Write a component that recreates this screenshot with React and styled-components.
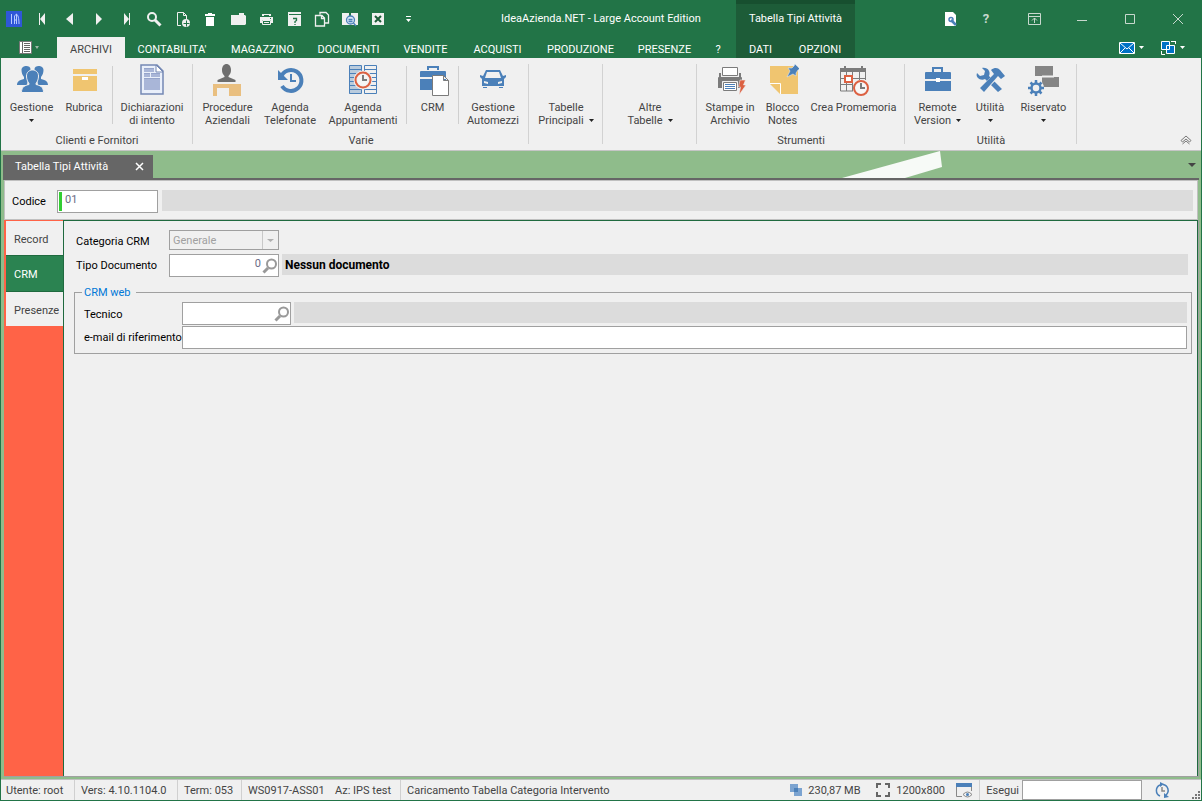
import React from 'react';
import styled, { createGlobalStyle, css } from 'styled-components';

const GlobalStyle = createGlobalStyle`
	* { box-sizing: border-box; }
	body {
		margin: 0;
		font: 11px/13px Roboto, Tahoma, sans-serif;
		color: #444;
	}
	button, input, select {
		margin: 0;
		padding: 0;
		border: 0;
		border-radius: 0;
		background: transparent;
		font: inherit;
		color: inherit;
	}
	svg { display: block; flex: none; }
`;

const blue = '#4b80b9';
const gray = '#7b7b7b';
const yellow = '#f0c570';
const red = '#dc6142';
const face = '#f0f0f0';

const Shell = styled.div`
	display: flex;
	flex-direction: column;
	min-height: 100vh;
	background: #227447;
`;

/* ---------- title bar and ribbon tabs ---------- */

const Header = styled.header`
	display: flex;
	color: #fff;
`;

const HeaderMain = styled.div`
	flex: none;
`;

const TitleRow = styled.div`
	display: flex;
	align-items: center;
	height: 37px;
`;

const TabRow = styled.nav`
	display: flex;
	align-items: stretch;
	height: 21px;
`;

const QuickButton = styled.button`
	display: flex;
	align-items: center;
	justify-content: center;
	width: ${p => p.$wide ? '32px' : '28px'};
	height: 28px;
`;

const WindowTitle = styled.div`
	padding-left: 77px;
	white-space: nowrap;
`;

const FileMenu = styled.button`
	display: flex;
	align-items: center;
	justify-content: center;
	gap: 3px;
	width: 57px;
`;

const Tab = styled.button`
	width: ${p => p.$w}px;
	padding-top: 3px;
	text-align: center;
	white-space: nowrap;
	color: #fff;
	${p => p.$active && css`
		background: ${face};
		color: #444;
	`}
`;

const Context = styled.div`
	flex: none;
	margin-left: 3px;
	border-top: 4px solid #174f2f;
	background: #1d5c38;
`;

const ContextTitle = styled.div`
	height: 33px;
	padding-top: 8px;
	text-align: center;
`;

const HeaderEnd = styled.div`
	flex: 1;
	display: flex;
	flex-direction: column;
	align-items: flex-end;
`;

const WindowButton = styled.button`
	display: flex;
	align-items: center;
	justify-content: center;
	width: ${p => p.$w || 48}px;
	height: 28px;
	color: #c8d8ce;
	font-weight: ${p => p.$bold ? 'bold' : 'normal'};
	font-size: 13px;
`;

const DropButton = styled.button`
	display: flex;
	align-items: center;
	gap: 4px;
	padding-right: 17px;
`;

/* ---------- ribbon ---------- */

const Frame = styled.div`
	flex: 1;
	display: flex;
	flex-direction: column;
	margin: 0 1px 1px;
	background: #8fbc8b;
`;

const Ribbon = styled.section`
	display: flex;
	height: 93px;
	background: ${face};
	border-bottom: 1px solid #c5c5c5;
`;

const Group = styled.div`
	display: flex;
	flex-direction: column;
	justify-content: space-between;
	margin: 6px 0;
	padding: 0 3px 0 4px;
	border-right: 1px solid #d2d2d2;
`;

const GroupItems = styled.div`
	display: flex;
`;

const GroupLabel = styled.div`
	height: 13px;
	margin-bottom: -3px;
	text-align: center;
	line-height: 13px;
`;

const Divider = styled.div`
	width: 1px;
	height: 58px;
	margin: 2px 2px 0;
	background: #cfcfcf;
`;

const BigButton = styled.button`
	display: flex;
	flex-direction: column;
	align-items: center;
	width: ${p => p.$w}px;
	white-space: nowrap;
`;

const BigIcon = styled.span`
	height: 37px;
	width: 32px;
`;

const BigLine = styled.span`
	display: flex;
	align-items: center;
	gap: 5px;
	height: 13px;
`;

const Collapse = styled.button`
	align-self: flex-end;
	margin: 0 9px 5px auto;
`;

/* ---------- document area ---------- */

const DocStrip = styled.div`
	position: relative;
	display: flex;
	align-items: flex-end;
	height: 29px;
	margin: 0 2px;
	border-bottom: 2px solid #666;
`;

const Sweep = styled.svg`
	position: absolute;
	right: 257px;
	top: 0;
`;

const DocTab = styled.div`
	display: flex;
	align-items: center;
	justify-content: space-between;
	width: 150px;
	height: 23px;
	padding: 0 9px 0 12px;
	background: #666;
	color: #fff;
`;

const DocMenu = styled.button`
	margin: 0 3px 10px auto;
`;

const CodeBar = styled.div`
	display: flex;
	align-items: flex-start;
	height: 40px;
	margin: 0 3px;
	padding: 9px 4px 0 7px;
	background: ${face};
	border: 1px solid #c0c0c0;
`;

const Label = styled.label`
	flex: none;
	width: ${p => p.$w}px;
	padding-top: ${p => p.$drop || 5}px;
	color: #000;
	white-space: nowrap;
`;

const Field = styled.div`
	display: flex;
	align-items: center;
	flex: ${p => p.$w ? 'none' : '1'};
	width: ${p => p.$w ? `${p.$w}px` : 'auto'};
	height: ${p => p.$short ? '20px' : '23px'};
	border: 1px solid #a0a0a0;
	background: ${p => p.$disabled ? face : '#fff'};
`;

const Required = styled.span`
	width: 3px;
	height: 19px;
	margin: 0 2px 0 1px;
	background: #32cd32;
`;

const TextInput = styled.input`
	flex: 1;
	min-width: 0;
	height: 21px;
	padding: 0 1px 5px;
	text-align: ${p => p.$right ? 'right' : 'left'};
	color: #6b6b85;
`;

const Select = styled.select`
	flex: 1;
	height: 18px;
	padding: 0 3px;
	appearance: none;
	opacity: 1;
	color: #a0a0a0;
`;

const SelectArrow = styled.span`
	display: flex;
	align-items: center;
	justify-content: center;
	width: 16px;
	height: 18px;
	border-left: 1px solid #c8c8c8;
`;

const Lookup = styled.button`
	width: 16px;
	height: 16px;
`;

const Readout = styled.output`
	flex: 1;
	height: 21px;
	margin-left: ${p => p.$gap || 3}px;
	padding: 5px 3px 0;
	background: #dcdcdc;
	color: #000;
	font-size: 12px;
	font-weight: bold;
`;

const Work = styled.main`
	flex: 1;
	display: flex;
	margin: 0 2px 0 3px;
	border-right: 1px solid #a0a0a0;
	border-bottom: 1px solid #a0a0a0;
	background: ${face};
`;

const Side = styled.nav`
	display: flex;
	flex-direction: column;
	width: 59px;
	padding: 1px 0 0 2px;
	background: #ff6347;
`;

const SideTab = styled.button`
	height: ${p => p.$active ? '37px' : '34px'};
	padding: 2px 0 0 8px;
	text-align: left;
	background: ${face};
	${p => p.$active && css`
		background: #2b8351;
		border: 1px solid #1f6a3f;
		border-width: 1px 0;
		color: #fff;
	`}
`;

const Form = styled.form`
	flex: 1;
	padding: 9px 5px 0 10px;
	border: 1px solid #1f6a3f;
	border-bottom: 0;
`;

const FormRow = styled.div`
	display: flex;
	align-items: flex-start;
	margin-bottom: ${p => p.$gap || 0}px;
	padding: 0 4px 0 2px;
`;

const FieldSet = styled.fieldset`
	margin: 9px 0 0;
	padding: 3px 0 4px 7px;
	border: 1px solid #a0a0a0;
`;

const Legend = styled.legend`
	height: 13px;
	padding: 0 5px 0 2px;
	color: #0078d7;
`;

/* ---------- status bar ---------- */

const Status = styled.footer`
	display: flex;
	align-items: center;
	height: 21px;
	margin-top: 2px;
	border-top: 1px solid #c0c0c0;
	background: ${face};
	white-space: nowrap;
`;

const StatusItem = styled.span`
	display: flex;
	align-items: center;
	gap: 6px;
	width: ${p => p.$w ? `${p.$w}px` : 'auto'};
	height: 20px;
	padding-left: ${p => p.$pad || 6}px;
	border-left: ${p => p.$line ? '1px solid #d0d0d0' : '0'};
`;

const StatusEnd = styled.div`
	display: flex;
	align-items: center;
	margin-left: auto;
`;

const RunInput = styled.input`
	width: 120px;
	height: 20px;
	margin-left: 3px;
	border: 1px solid #a0a0a0;
	background: #fff;
`;

const Grip = styled.span`
	align-self: flex-end;
	margin: 0 1px 1px 22px;
`;

/* ---------- icons ---------- */

const Caret = ({ color = '#222', w = 5 }) => (
	<svg width={w} height='3' viewBox='0 0 5 3' preserveAspectRatio='none'><path d='M0 0h5L2.5 3z' fill={color} /></svg>
);

const Small = ({ children }) => (
	<svg width='16' height='16' viewBox='0 0 16 16' fill='none'>{children}</svg>
);

const quick = [
	['Applicazione', <Small><path fill='#2f57d8' d='M0 0h16v16H0z' /><path stroke='#b9cbff' d='M5.500 3v10M8.500 13V5l2-2M10.500 3v10M13 13c0-6-1-9-2.500-10M8 9h3' /></Small>],
	['Primo', <Small><path fill='#f0f0f0' d='M5 2h1v12H5zM11 2v12L6 8z' /></Small>],
	['Precedente', <Small><path fill='#f0f0f0' d='M11 2v12L4 8z' /></Small>],
	['Successivo', <Small><path fill='#f0f0f0' d='M6 2v12l6-6z' /></Small>],
	['Ultimo', <Small><path fill='#f0f0f0' d='M11 2h1v12h-1zM6 2v12l5-6z' /></Small>],
	['Cerca', <Small><circle cx='6' cy='6' r='4' stroke='#f0f0f0' strokeWidth='2' /><path d='M9 9l5.500 5.500' stroke='#f0f0f0' strokeWidth='3' /></Small>],
	['Nuovo', <Small><path stroke='#f0f0f0' d='M7 14.500H3.500v-13h6l3 3V8M9.500 1.500v3h3' /><circle cx='12' cy='12' r='4' fill='#f0f0f0' /><path stroke='#227447' d='M12.500 9.500v6M9.500 12.500h6' /></Small>],
	['Elimina', <Small><path fill='#fff' d='M3 3h3V2h4v1h3v2H3zM4 6h8v9H4z' /></Small>],
	['Apri', <Small><path fill='#f0f0f0' d='M1 4h8V2h5v2h1l1 1v8l-1 1H1z' /></Small>],
	['Stampa', <Small><path fill='#f0f0f0' d='M4 3h9v2H4zM2 6h13v6h-2V9H4v3H2z' /><path stroke='#f0f0f0' d='M4.500 9.500h8v4h-8zM6 11.500h5' /><path fill='#227447' d='M12 7h1v1h-1zM6 4h5v1H6z' /></Small>],
	['Guida', <Small><path fill='#f0f0f0' d='M2 1h12v1H3v13H2z' /><path fill='#f0f0f0' d='M3 4h12v11H3zM2 1h13v2H2z' /><path stroke='#227447' strokeWidth='1.300' d='M7 7.500h3.500v2L9 10.500V12M9 13v1' /></Small>],
	['Copia', <Small><path stroke='#f0f0f0' strokeWidth='1.300' d='M6 3.500V1.500h6l2.500 2.500v8H11M1.500 4.500H8L10.500 7v8h-9zM7.500 4.500v3h3' /></Small>],
	['Anteprima', <Small><path fill='#f0f0f0' d='M0 2h7v1h2V2h7v12H0z' /><path fill='#227447' d='M7 2h2v3H7z' /><circle cx='8.500' cy='9' r='4' fill='#d8e8f8' stroke='#4b80b9' strokeWidth='1.300' /><path stroke='#4b80b9' strokeWidth='1.300' d='M6.500 8.500h4M6.500 10.500h4M11.500 12l2.500 3' /></Small>],
	['Chiudi', <Small><path fill='#f0f0f0' d='M2 2h12v12H2z' /><path stroke='#1c5c38' strokeWidth='2' d='M5 5l6 6M11 5l-6 6' /></Small>],
];

const Big = ({ children }) => (
	<svg width='32' height='32' viewBox='0 0 32 32' fill='none'>{children}</svg>
);

const People = () => (
	<Big>
		<g fill={blue}>
			<path d='M5.500 6c0-5 9-5 9-1 0 4-1 7-2.500 9l-1 7H1c0-3 2-5 7-6v-2c-1.500-2-2.500-4-2.500-7z' />
			<path d='M27.500 6c0-5-9-5-9-1 0 4 1 7 2.500 9l1 7h10c0-3-2-5-7-6v-2c1.500-2 2.500-4 2.500-7z' />
		</g>
		<path fill={blue} stroke={face} d='M10.500 12c0-8 12-8 12 0 0 3-1 5.500-2.500 7.500v1c4 1 7.500 2 7.500 8h-22c0-6 3.500-7 7.500-8v-1c-1.500-2-2.500-4.500-2.500-7.500z' />
	</Big>
);

const Box = () => (
	<Big><path fill={yellow} d='M5 5h24v5H5zM5 12h24v15H5z' /><path fill='#fff' d='M14 13h6v3h-6z' /></Big>
);

const Page = () => (
	<Big>
		<path d='M5 1h16l6 6v23H5z' fill='#e9effa' stroke='#7488b4' strokeWidth='1.500' />
		<path d='M20 1v7h7z' fill='#fff' stroke='#7488b4' />
		<path fill='#a9b6d8' d='M8 4h10v4H8zM8 9h6v4H8zM15 9h9v4h-9zM8 14h16v12H8z' />
		<path stroke='#95a4cb' d='M8 4.500h10M8 9.500h6M15 9.500h9M8 14.500h16' />
	</Big>
);

const Desk = () => (
	<Big>
		<path fill='#6e6e6e' d='M10 6c0-8 9-8 9 0 0 3-1 4.500-2.500 6v1l7 3v2h-18v-2l7-3v-1C11 10.500 10 9 10 6z' />
		<path fill='#e9bf80' d='M1 20h28v12H17v-8H5v8H1z' />
	</Big>
);

const History = () => (
	<Big>
		<path stroke={blue} strokeWidth='4' d='M7 13a10.500 10.500 0 1 1 1 9' />
		<path fill={blue} d='M4 6v10h10z' />
		<path stroke={blue} strokeWidth='2' d='M17 10v7h5' />
	</Big>
);

const Planner = () => (
	<Big>
		<path fill='#b9cbdd' d='M2 2h12v28H2z' />
		<path stroke={blue} d='M2.500 1.500h12v28h-12zM17.500 1.500h12v28h-12zM2 5.500h12M17 5.500h12M2 9.500h12M17 9.500h12M2 13.500h12M17 13.500h12M2 17.500h12M17 17.500h12M2 21.500h12M17 21.500h12M2 25.500h12M17 25.500h12' />
		<circle cx='16' cy='16' r='7.500' fill='#f5f5f5' stroke={face} strokeWidth='4' />
		<circle cx='16' cy='16' r='7.500' stroke={red} strokeWidth='2' />
		<path stroke={gray} strokeWidth='2' d='M16 11v5h4' />
	</Big>
);

const CaseDoc = () => (
	<Big>
		<path stroke={blue} strokeWidth='2' d='M11 6V3h10v3' />
		<path fill={blue} d='M4 7q-1 0-1 1v5h26V8q0-1-1-1zM3 15h26v11H3z' />
		<path fill='#fff' stroke={gray} d='M15.500 11.500h11l5 5v15h-16zM26.500 11.500v5h5' />
	</Big>
);

const Car = () => (
	<Big>
		<path fill={blue} fillRule='evenodd' d='M9 6h14l3 6 3-1v2l-2 2v7h-1v2h-4v-2H10v2H6v-2H5v-7l-2-2v-2l3 1zM10 8l-2 6h16l-2-6zM7 17v2l4 1v-2zM25 17v2l-4 1v-2z' />
		<path stroke={face} d='M5 22.500h22' />
	</Big>
);

const Printer = () => (
	<Big>
		<path fill={gray} d='M5 9h2v4h18V9h2v4q1 0 1 1v10H4V14q0-1 1-1z' />
		<path fill='#fff' stroke={gray} d='M8.500 3.500h15v8h-15z' />
		<path fill='#fff' stroke={face} d='M8.500 17.500h15v9h-15z' />
		<path fill='#fff' stroke={gray} d='M9.500 18.500h13v8h-13z' />
		<path stroke={blue} d='M11 20.500h10M11 22.500h10M11 24.500h10' />
		<path fill={red} stroke={face} strokeWidth='.6' d='M26 16h5.500l-2 5h2.500l-7 10 1.500-8h-2z' />
	</Big>
);

const Note = () => (
	<Big>
		<path fill={yellow} d='M3 2h28v28H14L3 19z' />
		<path fill={yellow} d='M3 20h10v10z' />
		<path stroke='#fff' d='M3 19.500h10.500V30' />
		<path fill={blue} stroke='#dfe8f0' strokeWidth='.6' d='M28 0l5 5-2 1-2 3v3l-3-2-6 3 3-6-2-3h4l2-2z' />
	</Big>
);

const Calendar = () => (
	<Big>
		<path fill={gray} d='M2 4h26v4H2zM6 2h2v4H6zM23 2h2v4h-2z' />
		<path stroke={gray} d='M2.500 4v23H15M27.500 4v12M8.500 8v19M14.500 8v19M21.500 8v8M2 14.500h26M2 20.500h13' />
		<path fill='#fff' stroke={red} strokeWidth='2' d='M7 12h7v6H7z' />
		<circle cx='23' cy='24' r='8' fill={face} />
		<circle cx='23' cy='24' r='7' fill='#f7f7f7' stroke={red} strokeWidth='2' />
		<path stroke={gray} strokeWidth='2' d='M23 19v5h4' />
	</Big>
);

const Case = () => (
	<Big>
		<path stroke={blue} strokeWidth='2' d='M11 8V4h9v4' />
		<path fill={blue} d='M4 8q-1 0-1 1v6h26V9q0-1-1-1zM3 17h26v10H3z' />
		<path fill='#fff' d='M14 14h4v4h-4z' />
	</Big>
);

const Tools = () => (
	<Big>
		<path fill={blue} d='M3 9L6 12l4-1 1-4-3-3c6-1 9 4 7 8l13 13-4 3-13-13C7 17 1 14 3 9z' />
		<path stroke={face} strokeWidth='6' d='M22 12L12 22' />
		<path fill={blue} d='M6 24L20 10l-3-4c4-3 7-2 9 0l5 6-4 3-3-3-14 16z' />
	</Big>
);

const Reserved = () => (
	<Big>
		<path fill='#858585' d='M7 2h18v10H7zM14 13h17v10H14z' />
		<path stroke={face} strokeWidth='2' d='M14 12.500h12' />
		<circle cx='8' cy='24' r='8' fill={face} />
		<circle cx='8' cy='24' r='4.500' stroke={blue} strokeWidth='2.500' />
		<path stroke={blue} strokeWidth='2.500' d='M8 16v3M8 29v3M0 24h3M13 24h3M2.500 18.500l2 2M11.500 27.500l2 2M13.500 18.500l-2 2M4.500 27.500l-2 2' />
	</Big>
);

const LookupIcon = () => (
	<svg width='16' height='16' viewBox='0 0 16 16' fill='none' stroke='#999'>
		<circle cx='9.500' cy='6' r='4.500' strokeWidth='2' />
		<path strokeWidth='3' d='M6 10l-4.500 4.500' />
	</svg>
);

/* ---------- data ---------- */

const tabs = [
	['ARCHIVI', 68], ["CONTABILITA'", 94], ['MAGAZZINO', 87], ['DOCUMENTI', 85], ['VENDITE', 69],
	['ACQUISTI', 75], ['PRODUZIONE', 91], ['PRESENZE', 77], ['?', 30],
];

const groups = [
	{
		label: 'Clienti e Fornitori',
		items: [
			{ w: 53, icon: <People />, lines: ['Gestione', ''], menu: true },
			{ w: 52, icon: <Box />, lines: ['Rubrica'] },
			null,
			{ w: 74, icon: <Page />, lines: ['Dichiarazioni', 'di intento'] },
		],
	},
	{
		label: 'Varie',
		items: [
			{ w: 61, icon: <Desk />, lines: ['Procedure', 'Aziendali'] },
			{ w: 64, icon: <History />, lines: ['Agenda', 'Telefonate'] },
			{ w: 82, icon: <Planner />, lines: ['Agenda', 'Appuntamenti'] },
			null,
			{ w: 47, icon: <CaseDoc />, lines: ['CRM'] },
			null,
			{ w: 64, icon: <Car />, lines: ['Gestione', 'Automezzi'] },
		],
	},
	{ items: [{ w: 66, lines: ['Tabelle', 'Principali'], menu: true }] },
	{ items: [{ w: 86, lines: ['Altre', 'Tabelle'], menu: true }] },
	{
		label: 'Strumenti',
		items: [
			{ w: 58, icon: <Printer />, lines: ['Stampe in', 'Archivio'] },
			{ w: 47, icon: <Note />, lines: ['Blocco', 'Notes'] },
			{ w: 95, icon: <Calendar />, lines: ['Crea Promemoria'] },
		],
	},
	{
		label: 'Utilità',
		items: [
			{ w: 57, icon: <Case />, lines: ['Remote', 'Version'], menu: true },
			{ w: 48, icon: <Tools />, lines: ['Utilità', ''], menu: true },
			{ w: 59, icon: <Reserved />, lines: ['Riservato', ''], menu: true },
		],
	},
];

const RibbonButton = ({ w, icon, lines, menu }) => (
	<BigButton type='button' $w={w}>
		<BigIcon>{icon}</BigIcon>
		{lines.map((line, i) => (
			<BigLine key={i}>
				{line}
				{menu && i === lines.length - 1 && <Caret />}
			</BigLine>
		))}
	</BigButton>
);

const TopBar = () => (
	<Header>
		<HeaderMain>
			<TitleRow>
				{quick.map(([name, icon]) => (
					<QuickButton key={name} type='button' aria-label={name}>{icon}</QuickButton>
				))}
				<QuickButton type='button' $wide aria-label='Personalizza'>
					<svg width='5' height='6'><path fill='#fff' d='M0 0h5v1H0zM0 3h5L2.500 6z' /></svg>
				</QuickButton>
				<WindowTitle>IdeaAzienda.NET - Large Account Edition</WindowTitle>
			</TitleRow>
			<TabRow>
				<FileMenu type='button' aria-label='Menu'>
					<svg width='13' height='13' viewBox='0 0 13 13' fill='none'>
						<path fill='#fff' stroke='#777' d='M.5.500h12v12H.5z' />
						<path stroke='#666' d='M3.500 1v11M5 2.500h6M5 4.500h6M5 6.500h6M5 8.500h6M5 10.500h6' />
					</svg>
					<Caret color='#9fb8a8' w={4} />
				</FileMenu>
				{tabs.map(([name, w], i) => (
					<Tab key={name} type='button' $w={w} $active={i === 0}>{name}</Tab>
				))}
			</TabRow>
		</HeaderMain>
		<Context>
			<ContextTitle>Tabella Tipi Attività</ContextTitle>
			<TabRow>
				<Tab type='button' $w={49}>DATI</Tab>
				<Tab type='button' $w={70}>OPZIONI</Tab>
			</TabRow>
		</Context>
		<HeaderEnd>
			<TitleRow>
				<WindowButton $w={22} type='button' aria-label='Impostazioni'>
					<Small>
						<path fill='#fff' d='M2 1h8l3 3v11H2z' />
						<path stroke={blue} strokeWidth='2.500' d='M8 9l5 5' />
						<circle cx='8' cy='8.500' r='2' stroke={blue} strokeWidth='1.500' />
					</Small>
				</WindowButton>
				<WindowButton $bold type='button'>?</WindowButton>
				<WindowButton type='button' aria-label='Barra'>
					<svg width='13' height='12' fill='none' stroke='#c8d8ce'><path d='M.5.500h12v11H.5zM0 3.500h13M6.500 10V5M4 7.500L6.500 5 9 7.500' /></svg>
				</WindowButton>
				<WindowButton type='button' aria-label='Riduci'>
					<svg width='10' height='10' stroke='#c8d8ce'><path d='M0 6.500h10' /></svg>
				</WindowButton>
				<WindowButton type='button' aria-label='Ingrandisci'>
					<svg width='10' height='10' fill='none' stroke='#c8d8ce'><path d='M.5.500h9v9h-9z' /></svg>
				</WindowButton>
				<WindowButton type='button' aria-label='Esci'>
					<svg width='10' height='10' stroke='#c8d8ce'><path d='M0 0l10 10M10 0L0 10' /></svg>
				</WindowButton>
			</TitleRow>
			<TabRow>
				<DropButton type='button' aria-label='Posta'>
					<svg width='16' height='12' fill='none'>
						<path fill='#0072c6' stroke='#fff' d='M.5.500h15v11H.5z' />
						<path stroke='#fff' d='M1 1l7 6 7-6M1 11l5-5M15 11l-5-5' />
					</svg>
					<Caret color='#fff' />
				</DropButton>
				<DropButton type='button' aria-label='Finestre'>
					<svg width='15' height='14' fill='none'>
						<path stroke='#fff' d='M10 .500h4.500M14.500 0v3M.5 10v3.500H4' />
						<path fill='#0072c6' stroke='#fff' d='M.5.500h8v8h-8zM5.500 4.500h8v8h-8z' />
					</svg>
					<Caret color='#fff' />
				</DropButton>
			</TabRow>
		</HeaderEnd>
	</Header>
);

const App = () => (
	<Shell>
		<GlobalStyle />
		<TopBar />
		<Frame>
			<Ribbon>
				{groups.map((group, g) => (
					<Group key={g}>
						<GroupItems>
							{group.items.map((item, i) => item ? <RibbonButton key={i} {...item} /> : <Divider key={i} />)}
						</GroupItems>
						<GroupLabel>{group.label}</GroupLabel>
					</Group>
				))}
				<Collapse type='button' aria-label='Comprimi'>
					<svg width='12' height='10' fill='none' stroke='#777'><path d='M1 5.500l5-4.500 5 4.500-1.500 1.500L6 4 2.500 7zM2.500 9L6 6l3.500 3' /></svg>
				</Collapse>
			</Ribbon>

			<DocStrip>
				<Sweep width='100' height='27'><path fill='#f7faf7' d='M0 27L98 0l2 16-37 11z' /></Sweep>
				<DocTab>
					Tabella Tipi Attività
					<button type='button' aria-label='Chiudi scheda'>
						<svg width='9' height='9' stroke='#fff' strokeWidth='1.500'><path d='M1 1l7 7M8 1L1 8' /></svg>
					</button>
				</DocTab>
				<DocMenu type='button' aria-label='Schede'>
					<svg width='8' height='5'><path fill='#444' d='M0 0h8L4 4z' /></svg>
				</DocMenu>
			</DocStrip>

			<CodeBar>
				<Label htmlFor='codice' $w={45}>Codice</Label>
				<Field $w={101}>
					<Required />
					<TextInput id='codice' defaultValue='01' />
				</Field>
				<Readout $gap={4} />
			</CodeBar>

			<Work>
				<Side>
					<SideTab type='button'>Record</SideTab>
					<SideTab type='button' $active>CRM</SideTab>
					<SideTab type='button'>Presenze</SideTab>
				</Side>
				<Form>
					<FormRow $gap={4}>
						<Label htmlFor='categoria' $w={93}>Categoria CRM</Label>
						<Field $w={110} $short $disabled>
							<Select id='categoria' disabled>
								<option>Generale</option>
							</Select>
							<SelectArrow><Caret color='#b0b0b0' w={7} /></SelectArrow>
						</Field>
					</FormRow>
					<FormRow>
						<Label htmlFor='tipo' $w={93}>Tipo Documento</Label>
						<Field $w={110}>
							<TextInput id='tipo' defaultValue='0' $right />
							<Lookup type='button' aria-label='Cerca documento'><LookupIcon /></Lookup>
						</Field>
						<Readout>Nessun documento</Readout>
					</FormRow>
					<FieldSet>
						<Legend>CRM web</Legend>
						<FormRow $gap={1}>
							<Label htmlFor='tecnico' $w={98} $drop={6}>Tecnico</Label>
							<Field $w={109}>
								<TextInput id='tecnico' />
								<Lookup type='button' aria-label='Cerca tecnico'><LookupIcon /></Lookup>
							</Field>
							<Readout />
						</FormRow>
						<FormRow>
							<Label htmlFor='email' $w={98}>e-mail di riferimento</Label>
							<Field>
								<TextInput id='email' />
							</Field>
						</FormRow>
					</FieldSet>
				</Form>
			</Work>

			<Status>
				<StatusItem $pad={5} $w={73}>Utente: root</StatusItem>
				<StatusItem $line $w={103}>Vers: 4.10.1104.0</StatusItem>
				<StatusItem $line $w={64}>Term: 053</StatusItem>
				<StatusItem $line $w={88}>WS0917-ASS01</StatusItem>
				<StatusItem $w={71}>Az: IPS test</StatusItem>
				<StatusItem $line>Caricamento Tabella Categoria Intervento</StatusItem>
				<StatusEnd>
					<StatusItem $w={86}>
						<svg width='12' height='12'><path fill='#7ba3d0' d='M0 0h8v8H0zM4 4h8v8H4z' /><path fill={blue} d='M4 4h4v4H4z' /></svg>
						230,87 MB
					</StatusItem>
					<StatusItem $w={80}>
						<svg width='14' height='14' fill='none' stroke='#666' strokeWidth='2'><path d='M1 5V1h4M9 1h4v4M13 9v4H9M5 13H1V9' /></svg>
						1200x800
					</StatusItem>
					<StatusItem $w={29}>
						<svg width='16' height='15' fill='none'>
							<path fill={blue} d='M0 0h16v4H0z' />
							<path stroke='#888' d='M.5 4v9.500H6M15.500 4v4' />
							<path stroke='#888' d='M7 11.500q4.500-5 9 0-4.500 5-9 0z' />
							<circle cx='11.500' cy='11.500' r='1.500' fill={blue} />
						</svg>
					</StatusItem>
					<StatusItem as='label' htmlFor='esegui' $line>Esegui</StatusItem>
					<RunInput id='esegui' />
					<StatusItem $pad={12}>
						<svg width='16' height='16' fill='none' stroke={blue} strokeWidth='1.500'>
							<path d='M6 14A6 6 0 0 1 6 3l2-1M9 2.500A6 6 0 0 1 12 13' />
							<path fill={blue} stroke='none' d='M6 0l4 2-4 3zM10 11v5l5-1z' />
							<path stroke='#888' d='M8 5v4h3' />
						</svg>
					</StatusItem>
					<Grip>
						<svg width='8' height='8'><path fill='#777' d='M6 0h2v2H6zM3 3h2v2H3zM6 3h2v2H6zM0 6h2v2H0zM3 6h2v2H3zM6 6h2v2H6z' /></svg>
					</Grip>
				</StatusEnd>
			</Status>
		</Frame>
	</Shell>
);

export default App;
